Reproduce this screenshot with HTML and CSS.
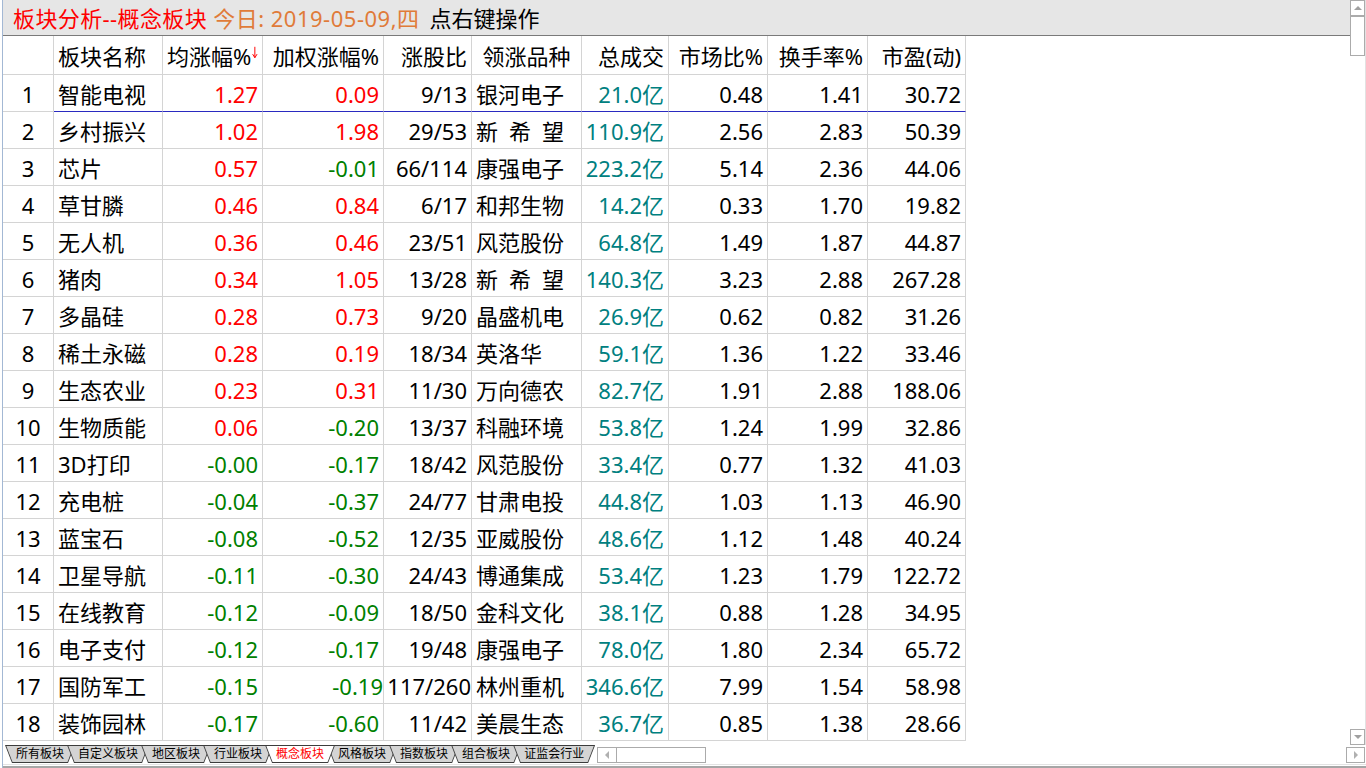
FILE: index.html
```html
<!DOCTYPE html>
<html lang="zh-CN">
<head>
<meta charset="utf-8">
<title>板块分析--概念板块</title>
<link rel="stylesheet" href="styles.css">
</head>
<body>
<div class="window">
  <div class="upper">
    <div class="main">
      <div class="titlebar">
        <span class="t-red">板块分析--概念板块</span>
        <span class="t-orange">今日: 2019-05-09,四</span>
        <span class="t-black">点右键操作</span>
      </div>
      <div class="grid">
        <div class="c hd"></div>
        <div class="c hd l">板块名称</div>
        <div class="c hd r">均涨幅%<svg class="arrow" width="7" height="15" viewBox="0 0 7 15"><path d="M3.5 0.5V13.5M0.8 9.5L3.5 14L6.2 9.5" fill="none" stroke="#f00" stroke-width="1.2"/></svg></div>
        <div class="c hd r">加权涨幅%</div>
        <div class="c hd r">涨股比</div>
        <div class="c hd ctr">领涨品种</div>
        <div class="c hd r">总成交</div>
        <div class="c hd r">市场比%</div>
        <div class="c hd r">换手率%</div>
        <div class="c hd r">市盈(动)</div>

        <div class="c n">1</div><div class="c l sel">智能电视</div><div class="c r up sel">1.27</div><div class="c r up sel">0.09</div><div class="c r sel">9/13</div><div class="c l sel">银河电子</div><div class="c r vol sel">21.0亿</div><div class="c r sel">0.48</div><div class="c r sel">1.41</div><div class="c r sel">30.72</div>
        <div class="c n">2</div><div class="c l">乡村振兴</div><div class="c r up">1.02</div><div class="c r up">1.98</div><div class="c r">29/53</div><div class="c l">新&ensp;希&ensp;望</div><div class="c r vol">110.9亿</div><div class="c r">2.56</div><div class="c r">2.83</div><div class="c r">50.39</div>
        <div class="c n">3</div><div class="c l">芯片</div><div class="c r up">0.57</div><div class="c r dn">-0.01</div><div class="c r">66/114</div><div class="c l">康强电子</div><div class="c r vol">223.2亿</div><div class="c r">5.14</div><div class="c r">2.36</div><div class="c r">44.06</div>
        <div class="c n">4</div><div class="c l">草甘膦</div><div class="c r up">0.46</div><div class="c r up">0.84</div><div class="c r">6/17</div><div class="c l">和邦生物</div><div class="c r vol">14.2亿</div><div class="c r">0.33</div><div class="c r">1.70</div><div class="c r">19.82</div>
        <div class="c n">5</div><div class="c l">无人机</div><div class="c r up">0.36</div><div class="c r up">0.46</div><div class="c r">23/51</div><div class="c l">风范股份</div><div class="c r vol">64.8亿</div><div class="c r">1.49</div><div class="c r">1.87</div><div class="c r">44.87</div>
        <div class="c n">6</div><div class="c l">猪肉</div><div class="c r up">0.34</div><div class="c r up">1.05</div><div class="c r">13/28</div><div class="c l">新&ensp;希&ensp;望</div><div class="c r vol">140.3亿</div><div class="c r">3.23</div><div class="c r">2.88</div><div class="c r">267.28</div>
        <div class="c n">7</div><div class="c l">多晶硅</div><div class="c r up">0.28</div><div class="c r up">0.73</div><div class="c r">9/20</div><div class="c l">晶盛机电</div><div class="c r vol">26.9亿</div><div class="c r">0.62</div><div class="c r">0.82</div><div class="c r">31.26</div>
        <div class="c n">8</div><div class="c l">稀土永磁</div><div class="c r up">0.28</div><div class="c r up">0.19</div><div class="c r">18/34</div><div class="c l">英洛华</div><div class="c r vol">59.1亿</div><div class="c r">1.36</div><div class="c r">1.22</div><div class="c r">33.46</div>
        <div class="c n">9</div><div class="c l">生态农业</div><div class="c r up">0.23</div><div class="c r up">0.31</div><div class="c r">11/30</div><div class="c l">万向德农</div><div class="c r vol">82.7亿</div><div class="c r">1.91</div><div class="c r">2.88</div><div class="c r">188.06</div>
        <div class="c n">10</div><div class="c l">生物质能</div><div class="c r up">0.06</div><div class="c r dn">-0.20</div><div class="c r">13/37</div><div class="c l">科融环境</div><div class="c r vol">53.8亿</div><div class="c r">1.24</div><div class="c r">1.99</div><div class="c r">32.86</div>
        <div class="c n">11</div><div class="c l">3D打印</div><div class="c r dn">-0.00</div><div class="c r dn">-0.17</div><div class="c r">18/42</div><div class="c l">风范股份</div><div class="c r vol">33.4亿</div><div class="c r">0.77</div><div class="c r">1.32</div><div class="c r">41.03</div>
        <div class="c n">12</div><div class="c l">充电桩</div><div class="c r dn">-0.04</div><div class="c r dn">-0.37</div><div class="c r">24/77</div><div class="c l">甘肃电投</div><div class="c r vol">44.8亿</div><div class="c r">1.03</div><div class="c r">1.13</div><div class="c r">46.90</div>
        <div class="c n">13</div><div class="c l">蓝宝石</div><div class="c r dn">-0.08</div><div class="c r dn">-0.52</div><div class="c r">12/35</div><div class="c l">亚威股份</div><div class="c r vol">48.6亿</div><div class="c r">1.12</div><div class="c r">1.48</div><div class="c r">40.24</div>
        <div class="c n">14</div><div class="c l">卫星导航</div><div class="c r dn">-0.11</div><div class="c r dn">-0.30</div><div class="c r">24/43</div><div class="c l">博通集成</div><div class="c r vol">53.4亿</div><div class="c r">1.23</div><div class="c r">1.79</div><div class="c r">122.72</div>
        <div class="c n">15</div><div class="c l">在线教育</div><div class="c r dn">-0.12</div><div class="c r dn">-0.09</div><div class="c r">18/50</div><div class="c l">金科文化</div><div class="c r vol">38.1亿</div><div class="c r">0.88</div><div class="c r">1.28</div><div class="c r">34.95</div>
        <div class="c n">16</div><div class="c l">电子支付</div><div class="c r dn">-0.12</div><div class="c r dn">-0.17</div><div class="c r">19/48</div><div class="c l">康强电子</div><div class="c r vol">78.0亿</div><div class="c r">1.80</div><div class="c r">2.34</div><div class="c r">65.72</div>
        <div class="c n">17</div><div class="c l">国防军工</div><div class="c r dn">-0.15</div><div class="c r dn tight">-0.19</div><div class="c r tight">117/260</div><div class="c l">林州重机</div><div class="c r vol">346.6亿</div><div class="c r">7.99</div><div class="c r">1.54</div><div class="c r">58.98</div>
        <div class="c n">18</div><div class="c l">装饰园林</div><div class="c r dn">-0.17</div><div class="c r dn">-0.60</div><div class="c r">11/42</div><div class="c l">美晨生态</div><div class="c r vol">36.7亿</div><div class="c r">0.85</div><div class="c r">1.38</div><div class="c r">28.66</div>
      </div>
    </div>
    <div class="vscroll">
      <div class="sbtn"><span class="tri-up"></span></div>
      <div class="thumb"></div>
      <div class="vspace"></div>
      <div class="sbtn"><span class="tri-down"></span></div>
    </div>
  </div>
  <div class="bottombar">
    <div class="tabs">
      <div class="tab"><span>所有板块</span></div>
      <div class="tab"><span>自定义板块</span></div>
      <div class="tab"><span>地区板块</span></div>
      <div class="tab"><span>行业板块</span></div>
      <div class="tab active"><span>概念板块</span></div>
      <div class="tab"><span>风格板块</span></div>
      <div class="tab"><span>指数板块</span></div>
      <div class="tab"><span>组合板块</span></div>
      <div class="tab"><span>证监会行业</span></div>
    </div>
    <div class="hscroll">
      <div class="hbtn"><span class="tri-left"></span></div>
    </div>
    <div class="hspace"></div>
    <div class="rbtn"><span class="tri-right"></span></div>
  </div>
  <div class="foot"></div>
</div>
</body>
</html>
```

FILE: styles.css
```css
* { box-sizing: border-box; }
html, body { margin: 0; padding: 0; }
body {
  width: 1366px;
  height: 768px;
  overflow: hidden;
  background: #fff;
  padding-left: 2px;
  font-family: "Noto Sans", "Noto Sans CJK SC", sans-serif;
  color: #000;
}
.window {
  height: 768px;
  display: flex;
  flex-direction: column;
  border-left: 1px solid #a3b8d4;
}
.upper { flex: 1; display: flex; min-height: 0; }
.main { flex: 1; min-width: 0; display: flex; flex-direction: column; }

.titlebar {
  height: 36px;
  flex: none;
  background: #e6e6e6;
  border-bottom: 1px solid #7a7a7a;
  display: flex;
  align-items: center;
  padding: 0 0 0 10px;
  font-size: 22px;
  line-height: 1;
  white-space: nowrap;
}
.t-red { color: #f00; letter-spacing: 0.4px; }
.t-orange { color: #e07b39; margin-left: 6px; letter-spacing: 0.5px; }
.t-black { color: #000; margin-left: 10px; }

.grid {
  display: grid;
  grid-template-columns: 51px 109px 100px 121px 88px 110px 87px 99px 100px 98px;
  grid-template-rows: 39px;
  grid-auto-rows: 37px;
  width: 963px;
  font-size: 22px;
  line-height: 1;
}
.c {
  display: flex;
  align-items: center;
  padding: 1px 4px 0;
  border-right: 1px solid #d4d4d4;
  border-bottom: 1px solid #d4d4d4;
  white-space: nowrap;
}
.l { justify-content: flex-start; }
.r { justify-content: flex-end; }
.ctr { justify-content: center; }
.n { justify-content: center; }
.up { color: #f00; }
.dn { color: #008000; }
.vol { color: #008080; }
.sel { border-bottom-color: #2a2ac0; }
.tight { padding-right: 0; overflow: visible; }
.arrow { align-self: flex-start; margin-top: 8px; margin-left: 1px; }

.vscroll {
  width: 16px;
  flex: none;
  border-right: 1px solid #e2e2e2;
  display: flex;
  flex-direction: column;
}
.sbtn {
  width: 15px;
  height: 16px;
  border: 1px solid #ababab;
  background: #fff;
  display: flex;
  align-items: center;
  justify-content: center;
}
.thumb { width: 15px; height: 40px; border: 1px solid #ababab; background: #fff; }
.vspace { flex: 1; }
.tri-up { width: 0; height: 0; border-left: 4px solid transparent; border-right: 4px solid transparent; border-bottom: 4px solid #a0a0a0; }
.tri-down { width: 0; height: 0; border-left: 4px solid transparent; border-right: 4px solid transparent; border-top: 4px solid #a0a0a0; }
.tri-left { width: 0; height: 0; border-top: 4px solid transparent; border-bottom: 4px solid transparent; border-right: 4px solid #b0b0b0; }
.tri-right { width: 0; height: 0; border-top: 4px solid transparent; border-bottom: 4px solid transparent; border-left: 4px solid #b0b0b0; }

.bottombar {
  height: 19px;
  flex: none;
  display: flex;
  align-items: flex-start;
}
.tabs { display: flex; padding-left: 2px; }
.tab {
  position: relative;
  height: 18px;
  padding: 0 11px;
  margin-left: -8px;
  font-size: 12px;
  line-height: 18px;
  background: #3c3c3c;
  clip-path: polygon(0 0, 100% 0, calc(100% - 7px) 100%, 7px 100%);
  white-space: nowrap;
}
.tab:first-child { margin-left: 0; }
.tab::before {
  content: "";
  position: absolute;
  inset: 0;
  background: #d4d4d4;
  clip-path: polygon(1.3px 1px, calc(100% - 1.3px) 1px, calc(100% - 7.5px) calc(100% - 1px), 7.5px calc(100% - 1px));
}
.tab span { position: relative; }
.tab.active { z-index: 5; color: #f00; }
.tab.active::before { background: #fff; }

.hscroll {
  margin: 2px 0 0 2px;
  width: 109px;
  height: 16px;
  border: 1px solid #ababab;
  background: #fff;
  display: flex;
}
.hbtn {
  width: 19px;
  height: 14px;
  border-right: 1px solid #ababab;
  display: flex;
  align-items: center;
  justify-content: center;
}
.hspace { flex: 1; }
.rbtn {
  margin: 2px 1px 0 0;
  width: 19px;
  height: 16px;
  border: 1px solid #ababab;
  background: #fff;
  display: flex;
  align-items: center;
  justify-content: center;
}
.foot {
  height: 4px;
  flex: none;
  border-top: 1px solid #e3e3e3;
  border-bottom: 2px solid #a6a6a6;
}
```
